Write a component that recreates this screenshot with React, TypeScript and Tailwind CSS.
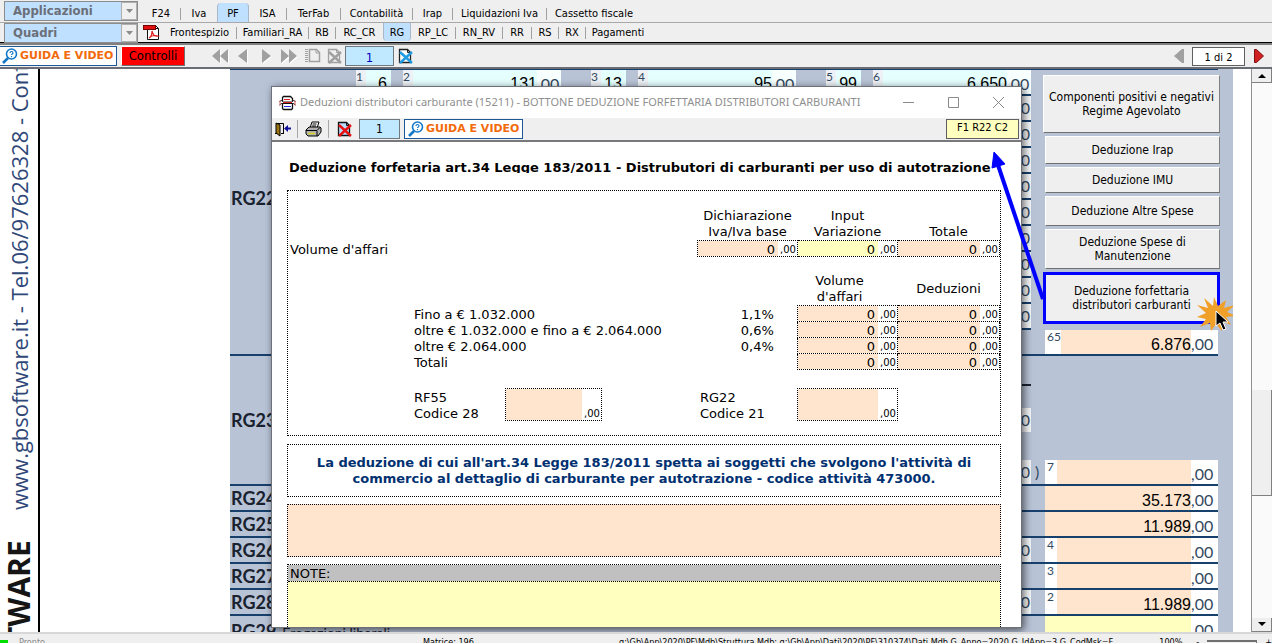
import React from 'react';
import clsx from 'clsx';

const TAHOMA = "font-['DejaVu_Sans_Condensed','DejaVu_Sans',sans-serif]";
const VERDANA = "font-['DejaVu_Sans',sans-serif]";

type Tab = { label: string; width: string; active?: boolean };

const appTabs: Tab[] = [
  { label: 'F24', width: 'w-[39px]' },
  { label: 'Iva', width: 'w-[36px]' },
  { label: 'PF', width: 'w-8', active: true },
  { label: 'ISA', width: 'w-[38px]' },
  { label: 'TerFab', width: 'w-[54px]' },
  { label: 'Contabilità', width: 'w-[72px]' },
  { label: 'Irap', width: 'w-10' },
  { label: 'Liquidazioni Iva', width: 'w-[94px]' },
  { label: 'Cassetto fiscale', width: 'w-[94px]' },
];

const quadriTabs: Tab[] = [
  { label: 'Frontespizio', width: 'w-[74px]' },
  { label: 'Familiari_RA', width: 'w-[72px]' },
  { label: 'RB', width: 'w-[27px]' },
  { label: 'RC_CR', width: 'w-[47px]' },
  { label: 'RG', width: 'w-7', active: true },
  { label: 'RP_LC', width: 'w-[45px]' },
  { label: 'RN_RV', width: 'w-[47px]' },
  { label: 'RR', width: 'w-[29px]' },
  { label: 'RS', width: 'w-[27px]' },
  { label: 'RX', width: 'w-[27px]' },
  { label: 'Pagamenti', width: 'w-[64px]' },
];

function PdfIcon() {
  return (
    <svg width="17" height="17" viewBox="0 0 17 17" aria-hidden="true">
      <path d="M4.5 1.5h8l3 3v11h-11z" fill="#fff" stroke="#111" />
      <path d="M12.5 1.5v3h3" fill="none" stroke="#111" />
      <rect x="0.5" y="1.5" width="12" height="4" fill="#e01010" stroke="#700" />
      <path d="M6 14c2-1 3-4 3-7 1 4 3 6 6 5-3-1-7 0-9 2z" fill="none" stroke="#e02020" strokeWidth="1.2" />
    </svg>
  );
}

function SearchHelpIcon() {
  return (
    <svg width="16" height="16" viewBox="0 0 16 16" fill="none" stroke="#1478c8" className="shrink-0" aria-hidden="true">
      <path d="M1 15l5-5" strokeWidth="2.6" />
      <circle cx="9.5" cy="6" r="5" strokeWidth="1.6" fill="#fff" />
      <path d="M8 5c0-2 3-2 3 0 0 1-1.500 1-1.500 2M9.500 8v1.200" strokeWidth="1.2" />
    </svg>
  );
}

function NavIcon({ d }: { d: string }) {
  return (
    <svg width="17" height="15" viewBox="0 0 17 15" aria-hidden="true">
      <path d={d} fill="#fff" transform="translate(1 1)" />
      <path d={d} fill="#a0a0a0" />
    </svg>
  );
}

function NotebookIcon() {
  return (
    <svg width="17" height="16" viewBox="0 0 17 16" fill="none" stroke="#a0a0a0" aria-hidden="true">
      <path d="M5.500 1.500h7l3 3v9h-10z" strokeWidth="1.500" />
      <path d="M12 1v4h4" />
      <path d="M2.500 1v13" strokeWidth="3" strokeDasharray="1 1" />
    </svg>
  );
}

function PageCrossIcon({ page, paper, cross }: { page: string; paper: string; cross: string }) {
  return (
    <svg width="16" height="16" viewBox="0 0 16 16" fill="none" aria-hidden="true">
      <path d="M1.500 1.500h8l3 3v10h-11z" fill={paper} stroke={page} strokeWidth="1.300" />
      <path d="M9.500 1.500v3h3" stroke={page} />
      <path d="M2 4l12 11M14 4L2 15" stroke={cross} strokeWidth="2.400" />
    </svg>
  );
}

function FormIcon() {
  return (
    <svg width="17" height="16" viewBox="0 0 17 16" fill="none" aria-hidden="true">
      <path d="M3.500 6.500v-4l1-1h7l2 2v3" fill="#fff" stroke="#111" strokeWidth="1.300" />
      <path d="M3.500 8.500v5l1 1h8l1-1v-5" fill="#fff" stroke="#111" strokeWidth="1.300" />
      <path d="M.5 6.500l2-1 2 1.500h8l2-1.500 2 1M.5 10l2-1.500h12l2 1.500" stroke="#111" />
      <path d="M1 5.500v5M16 5.500v5" stroke="#e06060" />
      <path d="M5 4.500h6M4 7.500h9" stroke="#e02020" />
      <path d="M5 11.500h7" stroke="#2030e0" />
    </svg>
  );
}

function ExitIcon() {
  return (
    <svg width="16" height="16" viewBox="0 0 16 16" aria-hidden="true">
      <path d="M1 2.500h7.500v10M0 12.500h3M6 12.500h3" fill="none" stroke="#000" />
      <path d="M1 2l4 2v11l-4-3z" fill="#9a7412" stroke="#000" />
      <path d="M9 7.500l4-3.500v2.500h3v2h-3V11z" fill="#10109c" />
    </svg>
  );
}

function PrinterIcon() {
  return (
    <svg width="17" height="16" viewBox="0 0 17 16" aria-hidden="true">
      <path d="M5 7l2-6h7l-2 6z" fill="#fff" stroke="#000" />
      <path d="M7.500 3h4M7 5h4" stroke="#000" />
      <path d="M1 9l3-3h11l1 1v4l-3 4H3l-2-2z" fill="#b0b0b0" stroke="#000" />
      <path d="M1 9.500h11l3-3M12 10v5" fill="none" stroke="#000" />
      <path d="M3 12.500h7" stroke="#d8d820" strokeWidth="1.500" />
    </svg>
  );
}

function GuidaButton() {
  return (
    <button
      className={clsx(
        VERDANA,
        'flex h-5 w-[119px] shrink-0 items-center gap-0.5 border border-[#1c5796] bg-white pl-[3px] text-[11px] leading-4 font-bold whitespace-nowrap text-[#f26a0a]',
      )}
    >
      <SearchHelpIcon />
      GUIDA E VIDEO
    </button>
  );
}

function Dropdown({ label }: { label: string }) {
  return (
    <div className="relative ml-1 h-5 w-[134px] shrink-0 border border-[#8c8c8c] bg-[#c0e0ff]">
      <select
        aria-label={label}
        className={clsx(TAHOMA, 'block h-full w-full appearance-none pl-2 text-[13px] leading-4 font-bold text-[#6b6f78]')}
      >
        <option>{label}</option>
      </select>
      <span className="pointer-events-none absolute inset-y-0 right-0 flex w-4 items-center justify-center border border-[#b0b0b0] bg-[#f0f0f0]">
        <svg width="7" height="4" viewBox="0 0 7 4" aria-hidden="true">
          <path d="M0 0h7L3.500 4z" fill="#8a8a8a" />
        </svg>
      </span>
    </div>
  );
}

function TabBar({ tabs, position }: { tabs: Tab[]; position: 'top' | 'bottom' }) {
  return (
    <nav className="flex h-full">
      {tabs.map((tab, i) => (
        <button
          key={tab.label}
          className={clsx(
            TAHOMA,
            tab.width,
            'flex shrink-0 items-center justify-center text-[11px] leading-4 whitespace-nowrap text-black',
            position === 'top' ? 'rounded-t pt-0.5' : 'rounded-b pt-px',
            tab.active && 'border-x border-[#a8b8c8] bg-[#c0e0ff]',
          )}
        >
          <span className="flex-1">{tab.label}</span>
          {!tab.active && !tabs[i + 1]?.active && i < tabs.length - 1 && <span className="h-3 w-px bg-[#a0a0a0]" />}
        </button>
      ))}
    </nav>
  );
}

function Toolbar() {
  return (
    <div className="flex h-[26px] shrink-0 items-center border-t-2 border-b-2 border-t-[#808080] border-b-[#6a6e74] bg-[#efefef]">
      <div className="-ml-0.5">
        <GuidaButton />
      </div>
      <button className="ml-1 h-5 w-16 border border-t-white border-r-[#707070] border-b-[#707070] border-l-white bg-[#ff0000] font-['DejaVu_Sans_Condensed',sans-serif] text-[13px] leading-4 text-black">
        Controlli
      </button>
      <div className="ml-[27px] flex items-center gap-1.5">
        <button aria-label="Primo">
          <NavIcon d="M8 0v14L0 7zM16 0v14L8 7z" />
        </button>
        <button aria-label="Precedente">
          <NavIcon d="M12 0v14L3 7z" />
        </button>
        <button aria-label="Successivo">
          <NavIcon d="M4 0v14l9-7z" />
        </button>
        <button aria-label="Ultimo">
          <NavIcon d="M0 0v14l8-7zM8 0v14l8-7z" />
        </button>
        <button aria-label="Nuovo">
          <NotebookIcon />
        </button>
        <button aria-label="Elimina">
          <PageCrossIcon page="#a0a0a0" paper="#efefef" cross="#a0a0a0" />
        </button>
      </div>
      <input
        aria-label="Record"
        defaultValue="1"
        className="ml-0.5 h-5 w-[49px] border border-[#707880] bg-[#c0e8ff] pt-0.5 text-center font-['DejaVu_Sans_Condensed',sans-serif] text-[13px] text-[#0000c0]"
      />
      <button aria-label="Annulla" className="ml-1">
        <PageCrossIcon page="#222" paper="#fff" cross="#1e9be0" />
      </button>
      <div className="ml-auto flex items-center pr-2">
        <button aria-label="Pagina precedente">
          <svg width="10" height="14" viewBox="0 0 10 14">
            <path d="M10 0v14H8L0 7l8-7z" fill="#a0a0a0" />
          </svg>
        </button>
        <input
          aria-label="Pagina"
          defaultValue="1 di 2"
          className={clsx(TAHOMA, 'ml-2 h-[19px] w-[53px] border border-[#606060] bg-white pt-0.5 text-center text-[11px] text-black')}
        />
        <button aria-label="Pagina successiva" className="ml-[9px]">
          <svg width="10" height="14" viewBox="0 0 10 14">
            <path d="M.5.5h2L9.500 7l-7 6.500h-2z" fill="#d02020" stroke="#801010" />
          </svg>
        </button>
      </div>
    </div>
  );
}

const MONEY = "font-['Liberation_Sans',sans-serif] text-base leading-5 text-black";
const CENTS = "font-['Lato',sans-serif] text-base leading-5 text-[#34495f]";

function TopField({ code, value, cents }: { code: string; value: string; cents?: boolean }) {
  return (
    <label className={clsx('flex h-6 shrink-0 bg-[#e5ffff]', cents ? 'w-[158px]' : 'w-[35px]')}>
      <span className="w-2.5 bg-[#eef2f6] font-['Lato',sans-serif] text-xs leading-[14px] text-[#34495f]">{code}</span>
      <input readOnly value={value} className={clsx(MONEY, 'min-w-0 flex-1 pt-1 text-right', !cents && 'pr-1')} />
      {cents && <span className={clsx(CENTS, 'w-6 bg-white/70 pt-1')}>,00</span>}
    </label>
  );
}

type FieldProps = { code?: string; value?: string; yellow?: boolean };

function AmountField({ code, value = '', yellow }: FieldProps) {
  return (
    <label className="flex h-6 w-full min-w-0 bg-white">
      {code && (
        <span
          className={clsx(
            "shrink-0 pl-0.5 font-['Lato',sans-serif] text-xs leading-[14px] text-[#34495f]",
            code.length > 1 ? 'w-4' : 'w-3',
          )}
        >
          {code}
        </span>
      )}
      <input
        readOnly
        value={value}
        className={clsx(MONEY, 'h-full min-w-0 flex-1 pt-1.5 text-right', yellow ? 'bg-[#ffffc0]' : 'bg-[#ffe5ce]')}
      />
      <span className={clsx(CENTS, 'w-[27px] shrink-0 pt-1')}>,00</span>
    </label>
  );
}

function EdgeCell() {
  return <span className={clsx(CENTS, 'block h-6 w-full bg-[#f4f6f8] pt-0.5 pr-px text-right')}>0</span>;
}

const rows: { code: string; field: FieldProps; edge?: boolean }[] = [
  { code: 'RG24', field: { value: '35.173' } },
  { code: 'RG25', field: { value: '11.989' } },
  { code: 'RG26', field: { code: '4' }, edge: true },
  { code: 'RG27', field: { code: '3' } },
  { code: 'RG28', field: { code: '2', value: '11.989' }, edge: true },
];

const sideButtons = [
  { label: ['Componenti positivi e negativi', 'Regime Agevolato'], size: 'h-[58px]' },
  { label: ['Deduzione Irap'], size: 'ml-0.5 h-7' },
  { label: ['Deduzione IMU'], size: 'ml-0.5 h-[26px]' },
  { label: ['Deduzione Altre Spese'], size: 'ml-0.5 h-[30px]' },
  { label: ['Deduzione Spese di', 'Manutenzione'], size: 'ml-0.5 h-10' },
];

function Arrow() {
  return (
    <svg
      className="pointer-events-none absolute right-full bottom-6 z-20"
      width="60"
      height="152"
      viewBox="0 0 60 152"
      aria-hidden="true"
    >
      <path d="M15 17l45 134" stroke="#0000ff" strokeWidth="4" />
      <path d="M11 4l11 12-13 4z" fill="#0000ff" stroke="#0000ff" />
    </svg>
  );
}

function ClickBurst() {
  return (
    <svg
      className="pointer-events-none absolute -right-4 -bottom-3 z-20"
      width="42"
      height="42"
      viewBox="0 0 42 42"
      aria-hidden="true"
    >
      <path
        d="M10 4l9 8 1-9 4 9 8-6-2 8 11-3-8 7 9 4-10 1 5 8-9-4 0 10-6-7-5 7-1-8-10 4 6-8-9-2 9-4-9-8 11 3z"
        fill="#f0a028"
      />
      <path d="M22 17v15l4-3 3 7 3-1-3-7h5z" fill="#000" stroke="#fff" />
    </svg>
  );
}

function SideButtons() {
  return (
    <div className={clsx(TAHOMA, '-mr-0.5 flex flex-col gap-[3px] pt-[5px] text-xs leading-[14px] text-black')}>
      {sideButtons.map((b) => (
        <button
          key={b.label[0]}
          className={clsx(b.size, 'border border-t-white border-r-[#808080] border-b-[#707070] border-l-white bg-[#efefef] whitespace-nowrap')}
        >
          {b.label.map((line) => (
            <span key={line} className="block">
              {line}
            </span>
          ))}
        </button>
      ))}
      <div className="relative">
        <button className="h-[52px] w-full border-[3px] border-[#0000ff] bg-[#efefef]">
          Deduzione forfettaria
          <br />
          distributori carburanti
        </button>
        <Arrow />
        <ClickBurst />
      </div>
    </div>
  );
}

const LABEL = "w-[125px] shrink-0 self-center pl-px font-['Lato',sans-serif] text-lg leading-5 font-bold text-[#1a2230]";
const ROW = 'flex shrink-0 border-b-2 border-[#17406c]';

function TaxForm() {
  return (
    <div className="flex min-w-0 flex-1 flex-col overflow-hidden bg-[#b8c3d6] pr-[15px]">
      <div className={clsx(ROW, 'h-[287px] border-t')}>
        <div className={clsx(LABEL, 'pb-7')}>RG22</div>
        <div className="flex min-w-0 flex-1 flex-col items-end">
          <div className="flex h-[26px] gap-[30px] border-b-2 border-[#17406c]">
            <div className="flex gap-3">
              <TopField code="1" value="6" />
              <TopField code="2" value="131" cents />
            </div>
            <div className="flex gap-3">
              <TopField code="3" value="13" />
              <TopField code="4" value="95" cents />
            </div>
            <div className="flex gap-3">
              <TopField code="5" value="99" />
              <TopField code="6" value="6.650" cents />
            </div>
          </div>
          {Array.from({ length: 9 }, (_, i) => (
            <div key={i} className="h-[26px] w-20 border-b-2 border-[#17406c]">
              <EdgeCell />
            </div>
          ))}
        </div>
        <div className="ml-3 flex w-[175px] shrink-0 flex-col justify-between">
          <SideButtons />
          <div className="pl-0.5">
            <AmountField code="65" value="6.876" />
          </div>
        </div>
      </div>

      <div className={clsx(ROW, 'h-[130px]')}>
        <div className={LABEL}>RG23</div>
        <div className="flex min-w-0 flex-1 flex-col items-end justify-end">
          <span className="mb-[22px] h-0.5 w-20 bg-[#1a2230]" />
          <div className="mb-7 w-20">
            <EdgeCell />
          </div>
          <div className="w-20">
            <EdgeCell />
          </div>
        </div>
        <div className="flex w-[187px] shrink-0 items-end">
          <span className={clsx(CENTS, 'w-[14px] shrink-0 pb-0.5 pl-1')}>)</span>
          <AmountField code="7" />
        </div>
      </div>

      {rows.map((row) => (
        <div key={row.code} className={clsx(ROW, 'h-[26px]')}>
          <div className={LABEL}>{row.code}</div>
          <div className="flex flex-1 justify-end">{row.edge && <div className="w-20"><EdgeCell /></div>}</div>
          <div className="ml-[14px] w-[173px] shrink-0">
            <AmountField {...row.field} />
          </div>
        </div>
      ))}

      <div className="flex h-[26px] shrink-0">
        <div className="flex-1 pt-1 pl-px font-['Lato',sans-serif] whitespace-nowrap text-[#1a2230]">
          <span className="text-lg leading-5 font-bold">RG29</span>
          <span className="ml-1.5 text-sm">Erogazioni liberali</span>
        </div>
        <div className="w-[173px] shrink-0">
          <AmountField yellow />
        </div>
      </div>
    </div>
  );
}

function Money({ yellow, value = '0' }: { yellow?: boolean; value?: string }) {
  return (
    <div className={clsx('flex', value ? 'h-[15px]' : 'h-full')}>
      <input
        aria-label="Importo"
        defaultValue={value}
        className={clsx('h-full min-w-0 flex-1 pt-px pr-[3px] text-right', yellow ? 'bg-[#ffffc0]' : 'bg-[#ffe5ce]')}
      />
      <span className="w-[19px] self-end pl-0.5 text-[10px] leading-3">,00</span>
    </div>
  );
}

const CELL = 'border border-dotted border-black p-0';
const HEAD = 'p-0 text-center align-bottom font-normal leading-4';

const brackets = [
  { label: 'Fino a € 1.032.000', rate: '1,1%' },
  { label: 'oltre € 1.032.000 e fino a € 2.064.000', rate: '0,6%' },
  { label: 'oltre € 2.064.000', rate: '0,4%' },
  { label: 'Totali', rate: '' },
];

function DeduzioneDialog() {
  return (
    <section
      role="dialog"
      aria-label="Deduzioni distributori carburante"
      className="absolute top-[17px] right-[250px] bottom-1 left-[271px] z-10 flex flex-col overflow-hidden border border-[#6e7278] bg-white shadow-[2px_2px_8px_rgba(0,0,0,0.6)]"
    >
      <header className="flex h-[31px] shrink-0 items-center pr-[17px] pl-[7px]">
        <FormIcon />
        <h1 className="ml-1 flex-1 font-['Noto_Sans',sans-serif] text-[11px] whitespace-nowrap text-[#8f8f8f]">
          Deduzioni distributori carburante (15211) - BOTTONE DEDUZIONE FORFETTARIA DISTRIBUTORI CARBURANTI
        </h1>
        <div className="flex gap-[34px]">
          {['M0 5.500h11', 'M.5.5h10v10H.5z', 'M0 0l11 11M11 0L0 11'].map((d, i) => (
            <button key={d} aria-label={['Riduci', 'Ingrandisci', 'Chiudi'][i]}>
              <svg width="11" height="11" viewBox="0 0 11 11" fill="none" stroke="#8a8a8a">
                <path d={d} />
              </svg>
            </button>
          ))}
        </div>
      </header>

      <div className="flex h-6 shrink-0 items-center border-b-2 border-[#77797c] bg-[#efefef] pr-0.5 pl-[3px]">
        <button aria-label="Esci">
          <ExitIcon />
        </button>
        <span className="ml-1.5 h-[18px] w-px bg-[#a8a8a8]" />
        <button aria-label="Stampa" className="ml-[7px]">
          <PrinterIcon />
        </button>
        <span className="ml-1.5 h-[18px] w-px bg-[#a8a8a8]" />
        <button aria-label="Elimina" className="ml-2">
          <PageCrossIcon page="#111" paper="#b8dcff" cross="#e81010" />
        </button>
        <input
          aria-label="Record"
          defaultValue="1"
          className="ml-1.5 h-5 w-[41px] border border-[#707880] bg-[#c0e8ff] text-center font-['DejaVu_Sans_Condensed',sans-serif] text-xs text-black"
        />
        <div className="ml-1">
          <GuidaButton />
        </div>
        <output className={clsx(TAHOMA, 'ml-auto h-5 w-[73px] border border-[#606060] bg-[#ffffc0] text-center text-[11px] leading-4 text-black')}>
          F1 R22 C2
        </output>
      </div>

      <div className={clsx(VERDANA, 'flex min-h-0 flex-1 flex-col overflow-hidden pr-5 pl-[15px] text-[13px] text-black')}>
        <h2 className="mt-4 h-[15px] shrink-0 overflow-hidden pl-0.5 leading-5 font-bold whitespace-nowrap">
          Deduzione forfetaria art.34 Legge 183/2011 - Distrubutori di carburanti per uso di autotrazione
        </h2>

        <div className="mt-[17px] h-[246px] shrink-0 border border-dotted border-black pt-[17px]">
          <table className="w-full table-fixed border-collapse">
            <colgroup>
              <col />
              <col className="w-[100px]" />
              <col className="w-[100px]" />
              <col className="w-[102px]" />
            </colgroup>
            <thead>
              <tr>
                <th />
                <th className={HEAD}>Dichiarazione Iva/Iva base</th>
                <th className={HEAD}>
                  Input
                  <br />
                  Variazione
                </th>
                <th className={HEAD}>Totale</th>
              </tr>
            </thead>
            <tbody>
              <tr>
                <th className="p-0 pt-px pl-0.5 text-left leading-[15px] font-normal">Volume d'affari</th>
                <td className={CELL}><Money /></td>
                <td className={CELL}><Money yellow /></td>
                <td className={CELL}><Money /></td>
              </tr>
            </tbody>
          </table>

          <table className="mt-4 w-full table-fixed border-collapse">
            <colgroup>
              <col />
              <col className="w-20" />
              <col className="w-[100px]" />
              <col className="w-[102px]" />
            </colgroup>
            <thead>
              <tr>
                <th />
                <th />
                <th className={clsx(HEAD, 'pr-4')}>
                  Volume
                  <br />
                  d'affari
                </th>
                <th className={clsx(HEAD, 'align-middle')}>Deduzioni</th>
              </tr>
            </thead>
            <tbody>
              {brackets.map((b) => (
                <tr key={b.label}>
                  <th className="p-0 pt-px pl-[126px] text-left leading-[15px] font-normal whitespace-nowrap">{b.label}</th>
                  <td className="p-0 pt-px text-center leading-[15px]">{b.rate}</td>
                  <td className={CELL}><Money /></td>
                  <td className={CELL}><Money /></td>
                </tr>
              ))}
            </tbody>
          </table>

          <div className="mt-[18px] flex h-[33px] pr-[102px] pl-[126px] leading-4">
            <div className="w-[91px] pt-0.5">
              RF55
              <br />
              Codice 28
            </div>
            <div className="w-[97px] border border-dotted border-black">
              <Money value="" />
            </div>
            <div className="ml-auto w-[97px] pt-0.5">
              RG22
              <br />
              Codice 21
            </div>
            <div className="w-[101px] border border-dotted border-black">
              <Money value="" />
            </div>
          </div>
        </div>

        <p className="mt-2 flex h-[53px] shrink-0 items-center justify-center border border-dotted border-black px-6 text-center leading-4 font-bold whitespace-nowrap text-[#003070]">
          La deduzione di cui all'art.34 Legge 183/2011 spetta ai soggetti che svolgono l'attività di
          <br />
          commercio al dettaglio di carburante per autotrazione - codice attività 473000.
        </p>

        <div className="mt-[7px] h-[53px] shrink-0 border border-dotted border-black bg-[#ffe5ce]" />

        <div className="mt-[7px] flex min-h-0 flex-1 flex-col border-x border-t border-dotted border-black">
          <label htmlFor="note" className="h-4 shrink-0 bg-[#c0c0c0] pl-0.5 leading-[18px]">
            NOTE:
          </label>
          <textarea id="note" className="block w-full flex-1 resize-none border-t border-dotted border-black bg-[#ffffc0]" />
        </div>
      </div>
    </section>
  );
}

function SideBanner() {
  return (
    <aside className="w-10 shrink-0 overflow-hidden border-r-2 border-black bg-white">
      <div className="flex h-full w-[38px] rotate-180 items-center gap-[30px] whitespace-nowrap [writing-mode:vertical-rl]">
        <strong className="-mt-3 font-['Open_Sans',sans-serif] text-[30px] leading-9 font-bold text-[#151515]">TWARE</strong>
        <span className="font-['Open_Sans',sans-serif] text-[22px] leading-8 text-[#2f4878]">
          www.gbsoftware.it - Tel.06/97626328 - Conf
        </span>
      </div>
    </aside>
  );
}

function ScrollBar() {
  return (
    <div className="flex w-[21px] shrink-0 flex-col border-l border-[#909090] bg-[#fafafa]">
      <button aria-label="Su" className="flex h-3.5 items-center justify-center border-r border-b border-[#808080] bg-[#efefef]">
        <svg width="8" height="4" viewBox="0 0 8 4"><path d="M4 0l4 4H0z" /></svg>
      </button>
      <div className="grow-[308]" />
      <div className="grow-[105] border-r border-b border-[#808080] bg-[#efefef]" />
      <div className="grow-[122]" />
      <button aria-label="Giù" className="flex h-3.5 items-center justify-center border-r border-b border-[#808080] bg-[#efefef]">
        <svg width="8" height="4" viewBox="0 0 8 4"><path d="M0 0h8L4 4z" /></svg>
      </button>
    </div>
  );
}

function StatusBar() {
  return (
    <footer
      className={clsx(
        TAHOMA,
        'flex h-[11px] shrink-0 items-start overflow-hidden border-t-2 border-[#d8d8d8] bg-[#efefef] pt-0.5 text-[9px] leading-3 whitespace-nowrap text-black',
      )}
    >
      <span className="mt-1 h-3 w-2 shrink-0 bg-[#00e000]" />
      <span className="ml-[11px] w-[404px] shrink-0 text-[#8a8a8a]">Pronto</span>
      <span className="w-[196px] shrink-0">Matrice: 196</span>
      <span className="min-w-0 flex-1">
        g:\Gb\App\2020\PF\Mdb\Struttura.Mdb; g:\Gb\App\Dati\2020\PF\310374\Dati.Mdb G_Anno=2020 G_IdApp=3 G_CodMsk=F
      </span>
      <span className="w-[37px] shrink-0">100%</span>
      <span>-</span>
      <span className="mt-1 ml-2 h-3 w-[50px] shrink-0 border-t-2 border-r border-[#707070]" />
      <span className="ml-2">+</span>
    </footer>
  );
}

export default function App() {
  return (
    <div className="flex h-screen flex-col overflow-hidden bg-[#efefef]">
      <div className="flex h-[23px] shrink-0 items-center border-b border-[#a9a9a9]">
        <Dropdown label="Applicazioni" />
        <div className="ml-1 h-full pt-[3px]">
          <TabBar tabs={appTabs} position="top" />
        </div>
      </div>
      <div className="flex h-5 shrink-0 items-center border-b border-black">
        <Dropdown label="Quadri" />
        <button aria-label="PDF" className="ml-[5px]">
          <PdfIcon />
        </button>
        <div className="ml-[3px] h-full pb-px">
          <TabBar tabs={quadriTabs} position="bottom" />
        </div>
      </div>
      <Toolbar />
      <main className="relative flex min-h-0 flex-1 overflow-hidden bg-white">
        <SideBanner />
        <div className="w-[190px] shrink-0" />
        <TaxForm />
        <div className="w-[18px] shrink-0" />
        <ScrollBar />
        <DeduzioneDialog />
      </main>
      <StatusBar />
    </div>
  );
}
